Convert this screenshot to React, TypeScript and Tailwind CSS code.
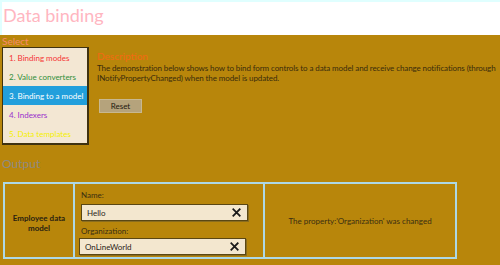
import React from "react";

const items = [
  { label: "1. Binding modes", cls: "text-[#f53535]" },
  { label: "2. Value converters", cls: "text-[#2f8f3a]" },
  { label: "3. Binding to a model", cls: "text-white bg-[#229fdc]" },
  { label: "4. Indexers", cls: "text-[#9a32cc]" },
  { label: "5. Data templates", cls: "text-[#f5f000]" },
];

function XIcon() {
  return (
    <svg width="9" height="9" viewBox="0 0 10 10" className="shrink-0">
      <path d="M1.5 1.5 L8.5 8.5 M8.5 1.5 L1.5 8.5" stroke="#1a1a1a" strokeWidth="2" strokeLinecap="square" />
    </svg>
  );
}

function TextBox({ value, extra }: { value: string; extra: string }) {
  return (
    <div className={`h-[17px] bg-[#f3e7cf] border border-[#5a4714] shadow-[1px_1px_0_#8a6d1e] flex items-center justify-between pl-[5px] pr-[6px] text-[8px] text-[#2a2418] ${extra}`}>
      <span>{value}</span>
      <XIcon />
    </div>
  );
}

export default function App() {
  return (
    <div
      className="w-[500px] h-[265px] overflow-hidden bg-white flex flex-col"
      style={{ fontFamily: 'Lato, "Open Sans", sans-serif' }}
    >
      <div className="h-[35px] shrink-0 border-t-2 border-l-2 border-[#e0ffff] pl-[1px]">
        <div className="text-[18px] leading-[26px] text-[#ffb6c1]">Data binding</div>
      </div>
      <div className="flex-1 bg-[#b8860b] flex flex-col">
        <div className="flex">
          <div className="w-[92px] pl-[2px] shrink-0">
            <div className="text-[10px] leading-[12px] text-[#fa8a6a]">Select</div>
            <div className="w-[87px] border border-[#3f3210] border-r-2 border-b-2 bg-[#f3e7d3]">
              {items.map((it) => (
                <div
                  key={it.label}
                  className={`h-[19px] pl-[6px] flex items-center text-[8px] whitespace-nowrap ${it.cls}`}
                >
                  {it.label}
                </div>
              ))}
            </div>
          </div>
          <div className="pl-[5px] pt-[15px] flex flex-col min-w-0">
            <div className="text-[10px] leading-[12px] text-[#f26a12]">Description</div>
            <div className="text-[8px] leading-[9.5px] text-[#3a2c0c] whitespace-nowrap mt-[2px] tracking-[-0.1px]">
              <div>The demonstration below shows how to bind form controls to a data model and receive change notifications (through</div>
              <div>INotifyPropertyChanged) when the model is updated.</div>
            </div>
            <div className="mt-[16px] ml-[2px] w-[43px] h-[14px] bg-[#b5a37c] border border-[#c8b890] flex items-center justify-center text-[8px] text-[#1f1a10]">
              Reset
            </div>
          </div>
        </div>
        <div className="pl-[2px] mt-[10px] text-[12px] leading-[18px] text-[#8e8a80]">Output</div>
        <div className="ml-[3px] mt-[9px] w-[454px] h-[77px] border-2 border-[#add8e6] flex">
          <div className="w-[70px] shrink-0 border-r-2 border-[#add8e6] flex items-center justify-center text-center text-[8px] font-bold leading-[10px] text-[#2a2210] pt-[5px]">
            <div>
              Employee data
              <br />
              model
            </div>
          </div>
          <div className="w-[190px] shrink-0 border-r-2 border-[#add8e6] pl-[4px] pr-[15px] flex flex-col">
            <div className="text-[8px] leading-[10px] text-[#3a2e12] mt-[6px] ml-[2px]">Name:</div>
            <TextBox value="Hello" extra="mt-[4px] ml-[2px] w-[167px]" />
            <div className="text-[8px] leading-[10px] text-[#3a2e12] mt-[5px] ml-[2px]">Organization:</div>
            <TextBox value="OnLineWorld" extra="mt-[2px] w-[167px]" />
          </div>
          <div className="flex-1 flex items-center justify-center text-[8px] text-[#3a2e12] pt-[1px]">
            The property:'Organization' was changed
          </div>
        </div>
      </div>
    </div>
  );
}
